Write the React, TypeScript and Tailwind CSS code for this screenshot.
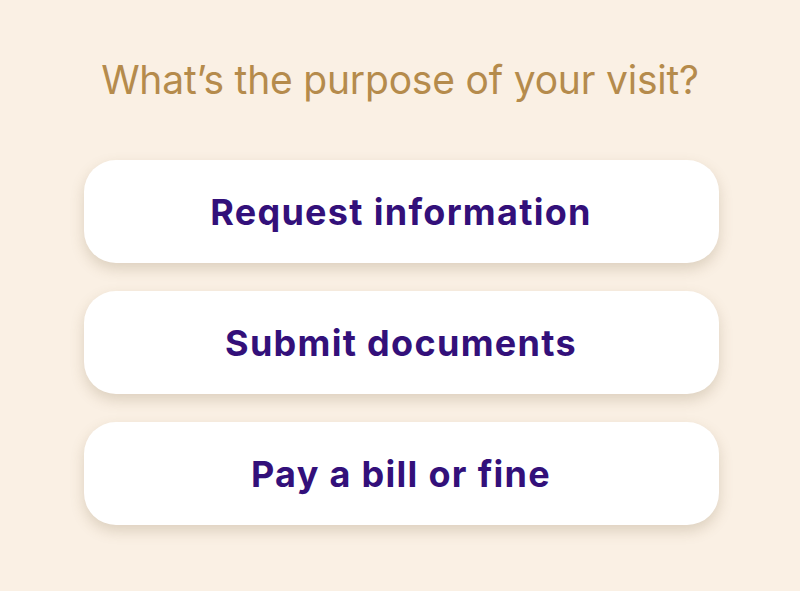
export default function App() {
  const items = ["Request information", "Submit documents", "Pay a bill or fine"];
  return (
    <div className="w-[800px] h-[591px] bg-[#faf0e4] flex flex-col items-center" style={{ fontFamily: "Inter, 'Noto Sans', sans-serif" }}>
      <h1 className="mt-[57px] text-[39px] leading-[46px] text-[#b58b4c] font-normal tracking-[-0.2px]">What’s the purpose of your visit?</h1>
      <div className="mt-[57px] flex flex-col gap-[28px] w-[635px] ml-[2px]">
        {items.map((t) => (
          <button key={t} className="h-[103px] w-full rounded-[32px] bg-white flex items-center justify-center text-[36px] font-bold tracking-[1.3px] text-[#33107a] shadow-[0_6px_14px_rgba(120,95,60,0.22)]">
            {t}
          </button>
        ))}
      </div>
    </div>
  );
}
